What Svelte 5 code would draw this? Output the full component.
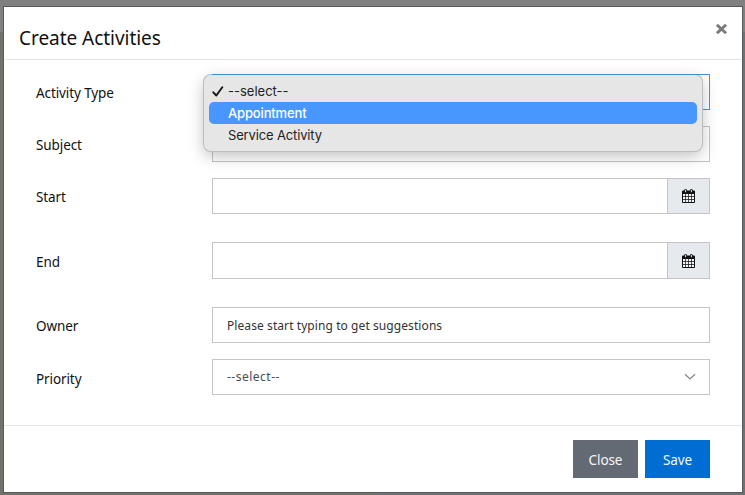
<script>
  const options = ['--select--', 'Appointment', 'Service Activity'];
  const selected = 0;
  const active = 1;
</script>

{#snippet calendar()}
  <svg class="cal" width="13" height="14" viewBox="0 0 13 14" aria-hidden="true">
    <path d="M1 1.500h11a1 1 0 0 1 1 1V13a1 1 0 0 1-1 1H1a1 1 0 0 1-1-1V2.500a1 1 0 0 1 1-1z" fill="#111" />
    <path d="M1 5h2.300v2.300H1zm3 0h2.200v2.300H4zm2.900 0h2.200v2.300H6.900zm2.900 0H12v2.300H9.800zM1 8h2.300v2.200H1zm3 0h2.200v2.200H4zm2.900 0h2.200v2.200H6.900zm2.900 0H12v2.200H9.800zM1 10.900h2.300V13H1zm3 0h2.200V13H4zm2.900 0h2.200V13H6.900zm2.900 0H12V13H9.800z" fill="#f3f4f7" />
    <rect x="2.300" y="0" width="2.600" height="4" rx="1.200" fill="#111" />
    <rect x="8.100" y="0" width="2.600" height="4" rx="1.200" fill="#111" />
    <path d="M3.600 .8v2.400M9.400 .8v2.400" stroke="#e6e9ee" stroke-width="1" />
  </svg>
{/snippet}

<div class="backdrop">
  <section class="modal">
    <header>
      <h1>Create Activities</h1>
      <button class="close" aria-label="Dismiss">
        <svg width="11" height="10" viewBox="0 0 11 10"><path d="M2 1.800l7 6.400M9 1.800l-7 6.400" stroke="#7b7b7b" stroke-width="2.900" stroke-linecap="square" /></svg>
      </button>
    </header>

    <div class="body">
      <div class="row">
        <div class="label">Activity Type</div>
        <div class="field focus">
          <div class="menu">
            {#each options as option, i}
              <div class="option" class:active={i === active}>
                <span class="tick">
                  {#if i === selected}
                    <svg width="12" height="11" viewBox="0 0 12 11"><path d="M1.300 6.300L4.300 9.500L10.300 1.300" fill="none" stroke="#161616" stroke-width="1.900" stroke-linecap="round" stroke-linejoin="round" /></svg>
                  {/if}
                </span>
                <span class="text" class:tight={i !== selected}>{option}</span>
              </div>
            {/each}
          </div>
        </div>
      </div>
      <div class="row">
        <div class="label">Subject</div>
        <div class="field"></div>
      </div>
      <div class="row start">
        <div class="label">Start</div>
        <div class="field"><div class="addon">{@render calendar()}</div></div>
      </div>
      <div class="row end">
        <div class="label">End</div>
        <div class="field"><div class="addon">{@render calendar()}</div></div>
      </div>
      <div class="row">
        <div class="label">Owner</div>
        <div class="field"><span class="value owner">Please start typing to get suggestions</span></div>
      </div>
      <div class="row">
        <div class="label low">Priority</div>
        <div class="field">
          <span class="value choice">--select--</span>
          <svg class="chevron" width="12" height="8" viewBox="0 0 12 8"><path d="M1 1.200l5 4.800 5-4.800" fill="none" stroke="#858585" stroke-width="1.200" /></svg>
        </div>
      </div>
    </div>

    <footer>
      <button class="btn secondary">Close</button>
      <button class="btn primary">Save</button>
    </footer>
  </section>
</div>

<style>
  .backdrop {
    box-sizing: border-box;
    width: 745px;
    height: 495px;
    padding: 6px 2px 2px 3px;
    overflow: hidden;
    background: linear-gradient(#808080 0 32px, transparent 32px),
      linear-gradient(90deg, #73716c 0 50%, #6d7374 50%);
    font-family: "Noto Sans", "Open Sans", sans-serif;
  }
  .modal {
    box-sizing: border-box;
    display: flex;
    flex-direction: column;
    width: 740px;
    height: 487px;
    border: 1px solid #5a5a5a;
    background: #fff;
  }
  header {
    box-sizing: border-box;
    display: flex;
    justify-content: space-between;
    height: 53px;
    padding: 17px 15px 0 15px;
    border-bottom: 1px solid #e5e5e5;
  }
  h1 {
    margin: 0;
    font-size: 19px;
    font-weight: 400;
    line-height: 28px;
    letter-spacing: -0.04px;
    color: #111;
  }
  button {
    border: 0;
    padding: 0;
    font-family: inherit;
  }
  .close {
    display: flex;
    height: 10px;
    background: none;
  }
  .body {
    box-sizing: border-box;
    display: flex;
    flex-direction: column;
    gap: 16px;
    height: 366px;
    padding: 14px 32px 0;
    border-bottom: 1px solid #e5e5e5;
  }
  .row {
    display: flex;
    height: 36px;
  }
  .start {
    margin-bottom: 12px;
  }
  .end {
    height: 37px;
    margin-bottom: 12px;
  }
  .label {
    width: 176px;
    padding-top: 1px;
    font-size: 13.500px;
    line-height: 36px;
    letter-spacing: -0.1px;
    color: #111;
  }
  .end .label,
  .low {
    padding-top: 2px;
  }
  .field {
    position: relative;
    box-sizing: border-box;
    display: flex;
    justify-content: space-between;
    align-items: center;
    width: 498px;
    height: 100%;
    border: 1px solid #c5c5c5;
  }
  .focus {
    border-color: #3f98e5;
  }
  .addon {
    box-sizing: border-box;
    display: flex;
    align-items: center;
    justify-content: center;
    width: 42px;
    height: 100%;
    border-left: 1px solid #c5c5c5;
    margin-left: auto;
    background: #e6e9ee;
  }
  .value {
    padding-left: 14px;
    font-size: 12px;
    line-height: 20px;
    color: #333;
  }
  .owner {
    padding-top: 2px;
    letter-spacing: 0.08px;
  }
  .choice {
    color: #4a4d55;
    letter-spacing: 0.5px;
  }
  .chevron {
    margin-right: 13px;
  }
  .menu {
    position: absolute;
    z-index: 2;
    top: 0;
    left: -9px;
    box-sizing: border-box;
    width: 498px;
    height: 76px;
    padding: 5px;
    border-radius: 7px;
    background: #e6e6e6;
    box-shadow: 0 0 0 1px #bdbdbd, 0 5px 16px rgba(0, 0, 0, 0.25);
    font-family: Inter, "Liberation Sans", sans-serif;
    font-size: 13px;
    color: #222;
  }
  /* Focus ring of the select stays visible along the menu's top edge. */
  .menu::before {
    content: "";
    position: absolute;
    top: -1px;
    left: 8px;
    right: 0;
    height: 1px;
    background: #3f8fd5;
  }
  .option {
    display: flex;
    align-items: center;
    height: 22px;
    border-radius: 5px;
  }
  .active {
    background: #4896ff;
    color: #fff;
    font-weight: 500;
  }
  .tick {
    display: flex;
    width: 16px;
    padding-left: 3px;
  }
  .tight {
    letter-spacing: -0.15px;
  }
  footer {
    display: flex;
    justify-content: flex-end;
    gap: 7px;
    padding: 14px 32px 0 0;
  }
  .btn {
    width: 65px;
    height: 38px;
    padding-top: 2px;
    font-size: 13.500px;
    letter-spacing: -0.1px;
    color: #f5f7fa;
  }
  .secondary {
    background: #636a73;
  }
  .primary {
    background: #006dd2;
  }
</style>
